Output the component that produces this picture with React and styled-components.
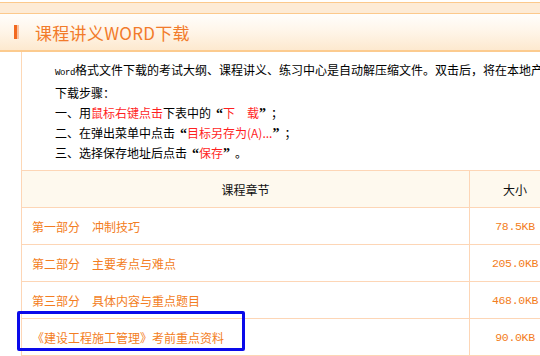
import React from "react";
import styled, { createGlobalStyle } from "styled-components";

const GlobalStyle = createGlobalStyle`
  html, body {
    margin: 0;
    padding: 0;
    background: #fff;
    overflow: hidden;
  }
  body {
    font-family: "Noto Sans CJK SC", "Liberation Sans", sans-serif;
    font-size: 12px;
    color: #000;
  }
`;

const Page = styled.div`
  width: 600px;
  padding-top: 2px;
`;

const TopBand = styled.div`
  height: 10px;
  background: #fdebd6;
  border-top: 1px solid #fcc98c;
  border-bottom: 1px solid #fcc98c;
`;

const Header = styled.div`
  height: 36px;
  display: flex;
  align-items: center;
  padding-left: 14px;
  background: linear-gradient(to bottom, #fffefc 0%, #fff6ea 45%, #fde9cf 100%);
  border-bottom: 2px solid #fccb8f;
`;

const Marker = styled.span`
  width: 3px;
  height: 14px;
  background: #f2691f;
  border-right: 2px solid #f9c2a2;
  margin-right: 16px;
`;

const Title = styled.h2`
  margin: 0;
  font-size: 17px;
  font-weight: normal;
  color: #f27b2a;
  letter-spacing: 0.3px;
`;

const Body = styled.div`
  margin-left: 21px;
  border-left: 1px solid #fdd8b6;
  position: relative;
`;

const Notes = styled.div`
  padding: 8px 0 7px 33px;
  line-height: 20px;
  white-space: nowrap;
`;

const Line = styled.div``;

const Mono = styled.span`
  font-family: "Liberation Mono", monospace;
  font-size: 9px;
  letter-spacing: -0.4px;
`;

// full-width curly quotes, glyph pushed to the inner side of its cell
const Quote = styled.span`
  display: inline-block;
  width: 12px;
  text-align: ${(p) => (p.$close ? "left" : "right")};
  font-family: "Liberation Serif", serif;
  font-size: 14px;
  font-weight: bold;
  line-height: 12px;
`;

const Red = styled.span`
  color: #ff1f1f;
`;

const Table = styled.table`
  width: 540px;
  margin-left: -1px;
  border-collapse: collapse;
`;

const Th = styled.th`
  height: 36px;
  background: #fef9ee;
  border: 1px solid #fdd6b6;
  font-weight: normal;
  font-size: 12px;
  color: #111;
  text-align: center;
  padding: 0;
  width: ${(p) => p.$w || "auto"};
`;

const Td = styled.td`
  height: 36px;
  border: 1px solid #fdd6b6;
  color: #f37d22;
  padding: 0 0 0 10px;
`;

const SizeTd = styled(Td)`
  padding: 0;
  text-align: center;
  font-family: "Liberation Mono", monospace;
  font-size: 11.5px;
  letter-spacing: -0.3px;
`;

const Highlight = styled.div`
  position: absolute;
  left: -5px;
  top: 259px;
  width: 222px;
  height: 34px;
  border: 3px solid #0a0aea;
  border-radius: 2px;
  pointer-events: none;
`;

const chapters = [
  { title: "第一部分　冲制技巧", size: "78.5KB" },
  { title: "第二部分　主要考点与难点", size: "205.0KB" },
  { title: "第三部分　具体内容与重点题目", size: "468.0KB" },
  { title: "《建设工程施工管理》考前重点资料", size: "90.0KB" },
];

export default function App() {
  return (
    <>
      <GlobalStyle />
      <Page>
        <TopBand />
        <Header>
          <Marker />
          <Title>课程讲义WORD下载</Title>
        </Header>
        <Body>
          <Notes>
            <Line>
              <Mono>Word</Mono>格式文件下载的考试大纲、课程讲义、练习中心是自动解压缩文件。双击后，将在本地产生文件夹
            </Line>
            <Line>下载步骤：</Line>
            <Line>
              一、用<Red>鼠标右键点击</Red>下表中的<Quote>“</Quote>
              <Red>下　载</Red>
              <Quote $close>”</Quote>；
            </Line>
            <Line>
              二、在弹出菜单中点击<Quote>“</Quote>
              <Red>目标另存为(A)...</Red>
              <Quote $close>”</Quote>；
            </Line>
            <Line>
              三、选择保存地址后点击<Quote>“</Quote>
              <Red>保存</Red>
              <Quote $close>”</Quote>。
            </Line>
          </Notes>
          <Table>
            <thead>
              <tr>
                <Th>课程章节</Th>
                <Th $w="90px">大小</Th>
              </tr>
            </thead>
            <tbody>
              {chapters.map((c) => (
                <tr key={c.title}>
                  <Td>{c.title}</Td>
                  <SizeTd>{c.size}</SizeTd>
                </tr>
              ))}
            </tbody>
          </Table>
          <Highlight />
        </Body>
      </Page>
    </>
  );
}
